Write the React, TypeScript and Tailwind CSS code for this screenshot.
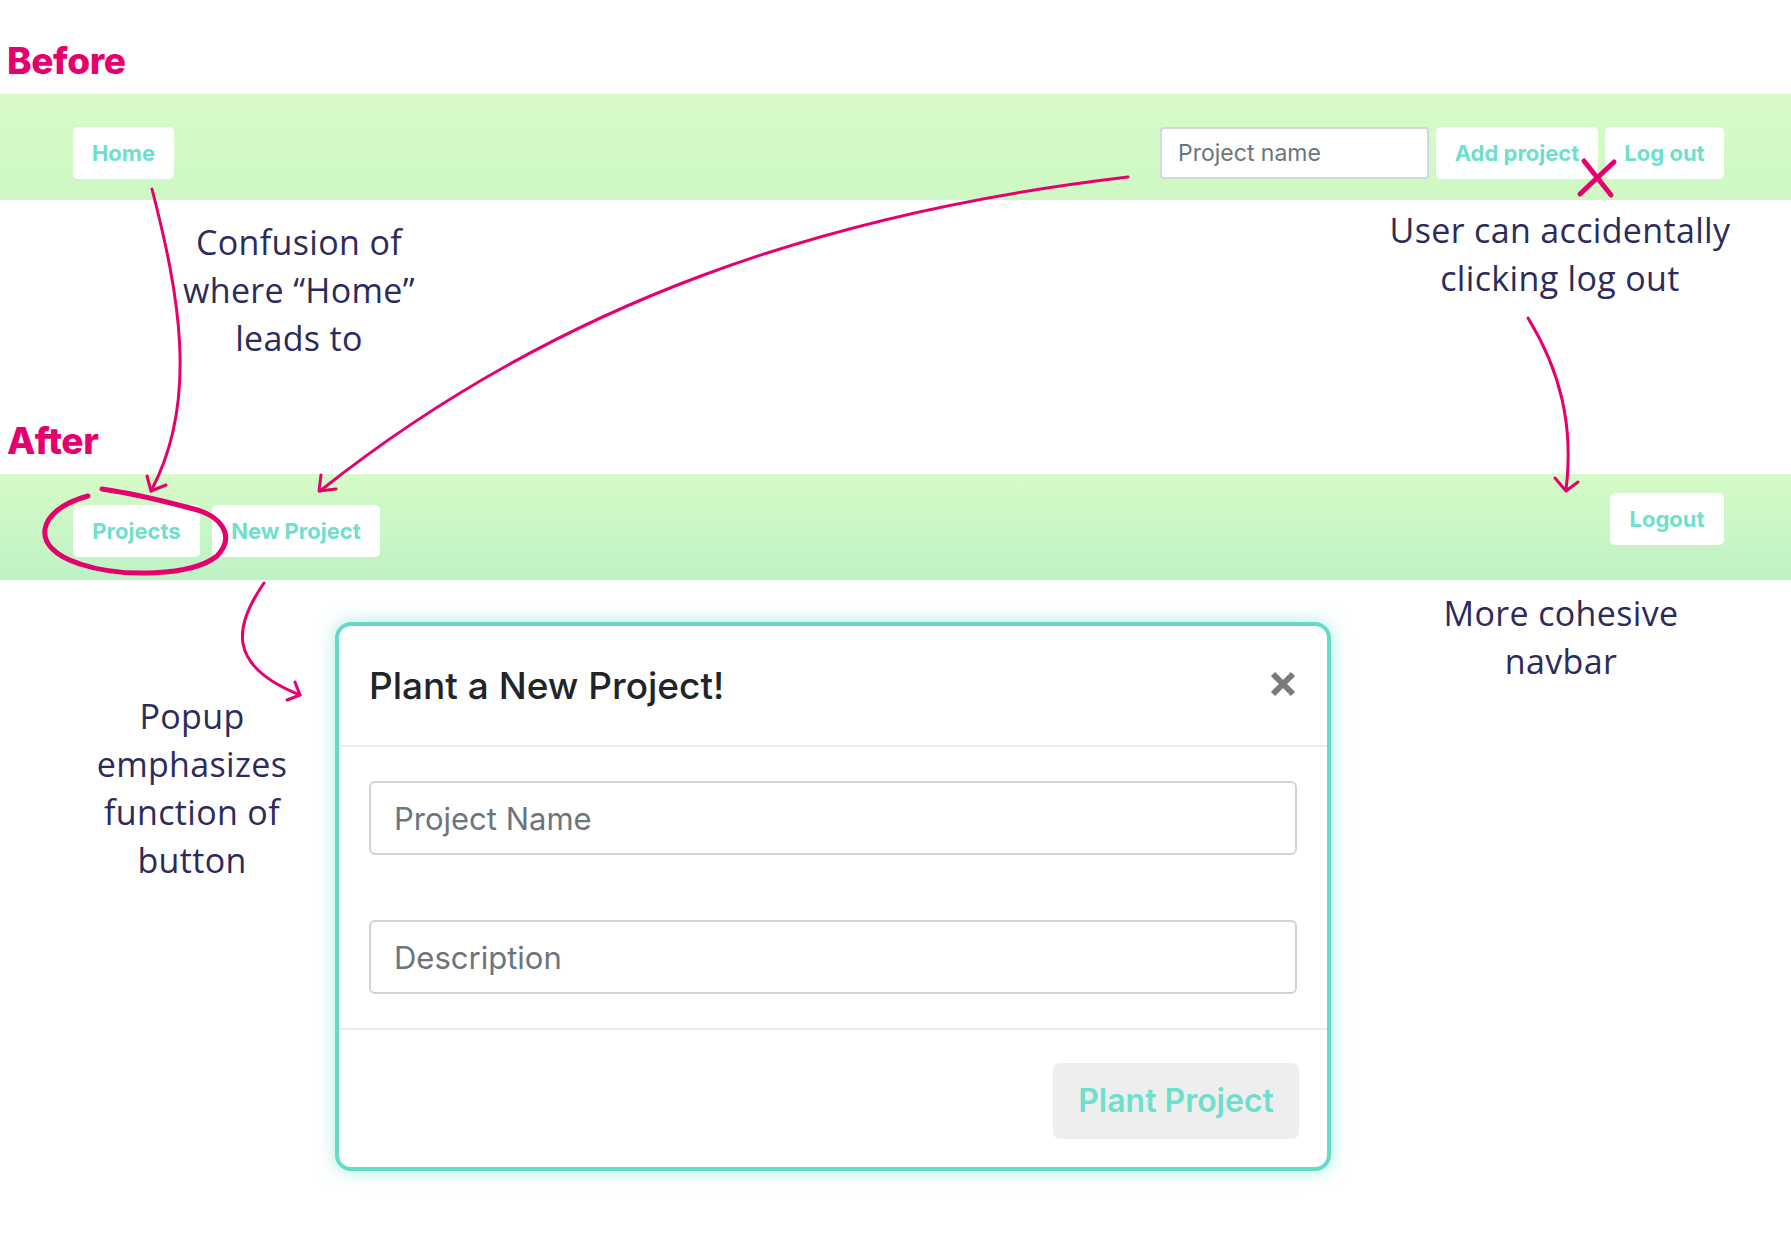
import React from "react";

const note = "font-['Open_Sans',sans-serif] text-[34px] tracking-[0.01em] leading-[48px] text-[#2c2b59] text-center";
const navBtn =
  "flex h-[52px] items-center justify-center rounded-[5px] bg-white text-[22px] font-bold text-[#6fdfcd]";

function Heading({ children }: { children: React.ReactNode }) {
  return (
    <h1 className="pl-[7px] text-[37px] font-extrabold leading-none tracking-[-0.01em] text-[#e5006d]">
      {children}
    </h1>
  );
}

function Annotations() {
  return (
    <svg
      className="pointer-events-none absolute left-0 top-0"
      width={1791}
      height={1241}
      viewBox="0 0 1791 1241"
      fill="none"
      stroke="#e5006d"
      strokeLinecap="round"
      strokeLinejoin="round"
      strokeWidth={3}
    >
      {/* home -> projects */}
      <path d="M152 189 C 178 290, 200 400, 151 491" />
      <path d="M147 476 L151 491 L166 485" />
      {/* add project -> new project */}
      <path d="M1128 177 C 830 212, 560 300, 320 491" />
      <path d="M321 475 L319 491 L336 489" />
      {/* log out -> logout */}
      <path d="M1528 318 C 1560 370, 1574 425, 1566 490" />
      <path d="M1555 478 L1566 491 L1578 482" />
      {/* new project -> popup */}
      <path d="M264 583 C 235 625, 225 665, 300 695" />
      <path d="M287 700 L300 695 L295 682" />
      {/* ring round Projects */}
      <path
        d="M88 496 C 36 510, 28 548, 80 564 C 122 578, 192 576, 217 556 C 236 536, 222 515, 190 508 C 160 500, 130 493, 102 489"
        strokeWidth={5}
      />
      {/* cross over log out */}
      <path d="M1580 194 L1614 162 M1584 161 L1611 195" strokeWidth={5} />
    </svg>
  );
}

function Modal() {
  return (
    <div className="mt-[42px] w-[996px] shrink-0 rounded-[16px] border-[4px] border-[#64dbc7] bg-white shadow-[0_0_18px_rgba(98,218,198,0.55)]">
      <div className="flex h-[121px] items-center justify-between border-b-2 border-[#e9ecef] pl-[30px] pr-[30px]">
        <h2 className="text-[37px] font-medium leading-none text-[#212529]">Plant a New Project!</h2>
        <svg width="28" height="26" viewBox="0 0 28 26" className="mt-[-4px]">
          <path d="M4 3 L24 23 M24 3 L4 23" stroke="#7a7a7a" strokeWidth="6" />
        </svg>
      </div>
      <div className="flex flex-col gap-[65px] px-[30px] py-[34px]">
        <input
          placeholder="Project Name"
          className="h-[74px] rounded-[6px] border-2 border-[#ced4da] px-[23px] text-[31px] text-[#495057] outline-none placeholder:text-[#6c757d]"
        />
        <input
          placeholder="Description"
          className="h-[74px] rounded-[6px] border-2 border-[#ced4da] px-[23px] text-[31px] text-[#495057] outline-none placeholder:text-[#6c757d]"
        />
      </div>
      <div className="flex justify-end border-t-2 border-[#e9ecef] pb-[28px] pr-[28px] pt-[33px]">
        <button className="h-[76px] w-[246px] rounded-[7px] bg-[#eeeeee] text-[32px] font-semibold text-[#6fdfcd]">
          Plant Project
        </button>
      </div>
    </div>
  );
}

export default function App() {
  return (
    <div className="relative h-[1241px] w-[1791px] overflow-hidden bg-white font-['Inter',sans-serif]">
      <div className="h-[94px] pt-[42px]">
        <Heading>Before</Heading>
      </div>

      <nav className="flex h-[106px] items-start justify-between bg-gradient-to-b from-[#d9fbc8] to-[#cdf8c4] pl-[73px] pr-[67px] pt-[33px]">
        <button className={`${navBtn} w-[101px]`}>Home</button>
        <div className="flex gap-[7px]">
          <input
            placeholder="Project name"
            className="h-[52px] w-[269px] rounded-[4px] border-2 border-[#d4d8dc] bg-white pl-[16px] text-[23px] outline-none placeholder:text-[#6c757d]"
          />
          <button className={`${navBtn} w-[162px]`}>Add project</button>
          <button className={`${navBtn} w-[119px]`}>Log out</button>
        </div>
      </nav>

      <div className="flex h-[274px] flex-col">
        <div className="flex h-[162px] items-start justify-between">
          <p className={`${note} ml-[149px] mt-[18px] w-[300px]`}>
            Confusion of
            <br />
            where “Home”
            <br />
            leads to
          </p>
          <p className={`${note} mr-[31px] mt-[6px] w-[400px]`}>
            User can accidentally
            <br />
            clicking log out
          </p>
        </div>
        <div className="mt-[60px]">
          <Heading>After</Heading>
        </div>
      </div>

      <nav className="flex h-[106px] items-start justify-between bg-gradient-to-b from-[#d6fbc7] to-[#bef2c5] pl-[73px] pr-[67px]">
        <div className="mt-[31px] flex gap-[12px]">
          <button className={`${navBtn} w-[127px]`}>Projects</button>
          <button className={`${navBtn} w-[168px]`}>New Project</button>
        </div>
        <button className={`${navBtn} mt-[19px] w-[114px]`}>Logout</button>
      </nav>

      <div className="flex items-start">
        <div className="w-[335px] shrink-0">
          <p className={`${note} ml-[42px] mt-[112px] w-[300px]`}>
            Popup
            <br />
            emphasizes
            <br />
            function of
            <br />
            button
          </p>
        </div>
        <Modal />
        <div className="flex-1">
          <p className={`${note} mt-[9px]`}>
            More cohesive
            <br />
            navbar
          </p>
        </div>
      </div>

      <Annotations />
    </div>
  );
}
